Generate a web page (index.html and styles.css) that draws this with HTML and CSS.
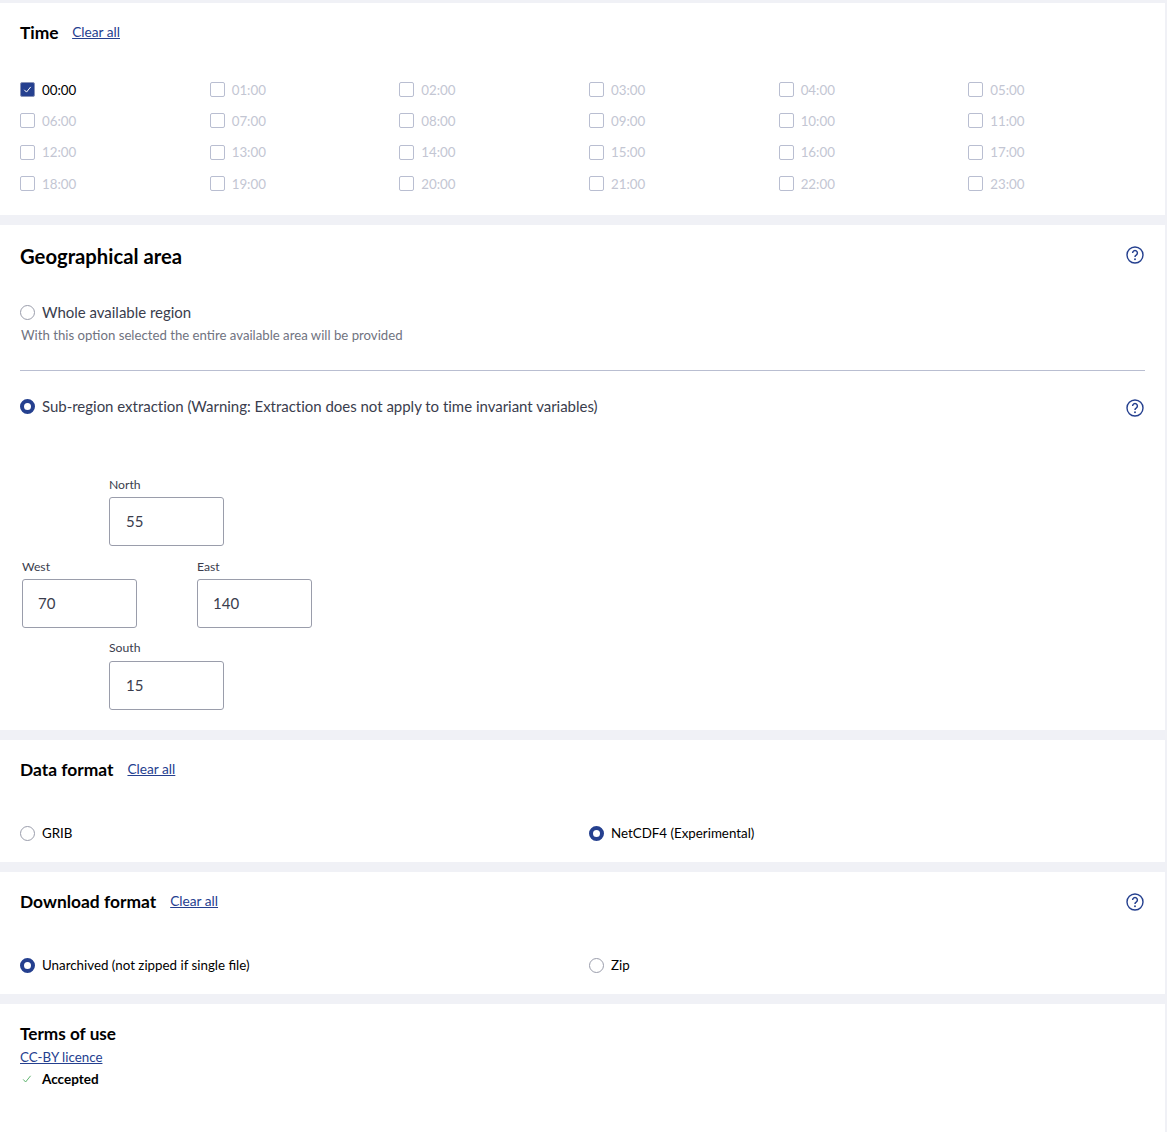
FILE: index.html
```html
<!DOCTYPE html>
<html lang="en">
<head>
<meta charset="utf-8">
<title>Download form</title>
<link rel="stylesheet" href="styles.css">
</head>
<body>
<main class="page">
  <section class="card card-time">
    <div class="head"><h2 class="title">Time</h2><a class="clear" href="#">Clear all</a></div>
    <div class="options time-grid">
      <label class="opt on"><span class="box checked"><svg viewBox="0 0 15 15" width="15" height="15"><path d="M4.3 7.8l2.2 2.3 4.2-5.2" fill="none" stroke="#fff" stroke-width="1"/></svg></span>00:00</label>
      <label class="opt off"><span class="box"></span>01:00</label>
      <label class="opt off"><span class="box"></span>02:00</label>
      <label class="opt off"><span class="box"></span>03:00</label>
      <label class="opt off"><span class="box"></span>04:00</label>
      <label class="opt off"><span class="box"></span>05:00</label>
      <label class="opt off"><span class="box"></span>06:00</label>
      <label class="opt off"><span class="box"></span>07:00</label>
      <label class="opt off"><span class="box"></span>08:00</label>
      <label class="opt off"><span class="box"></span>09:00</label>
      <label class="opt off"><span class="box"></span>10:00</label>
      <label class="opt off"><span class="box"></span>11:00</label>
      <label class="opt off"><span class="box"></span>12:00</label>
      <label class="opt off"><span class="box"></span>13:00</label>
      <label class="opt off"><span class="box"></span>14:00</label>
      <label class="opt off"><span class="box"></span>15:00</label>
      <label class="opt off"><span class="box"></span>16:00</label>
      <label class="opt off"><span class="box"></span>17:00</label>
      <label class="opt off"><span class="box"></span>18:00</label>
      <label class="opt off"><span class="box"></span>19:00</label>
      <label class="opt off"><span class="box"></span>20:00</label>
      <label class="opt off"><span class="box"></span>21:00</label>
      <label class="opt off"><span class="box"></span>22:00</label>
      <label class="opt off"><span class="box"></span>23:00</label>
    </div>
  </section>

  <section class="card card-geo">
    <div class="geo-head">
      <h2 class="title-lg">Geographical area</h2>
      <svg class="help" viewBox="0 0 18 18" width="18" height="18"><circle cx="9" cy="9" r="8" fill="none" stroke="#25408f" stroke-width="1.4"/><path d="M6.6 7a2.4 2.4 0 1 1 3.6 2.1c-.8.5-1.2.9-1.2 1.9" fill="none" stroke="#25408f" stroke-width="1.5"/><circle cx="9" cy="13.3" r=".95" fill="#25408f"/></svg>
    </div>
    <label class="opt-lg whole"><span class="radio"></span>Whole available region</label>
    <p class="hint">With this option selected the entire available area will be provided</p>
    <hr class="rule">
    <div class="sub-row">
      <label class="opt-lg"><span class="radio selected"></span>Sub-region extraction (Warning: Extraction does not apply to time invariant variables)</label>
      <svg class="help" viewBox="0 0 18 18" width="18" height="18"><circle cx="9" cy="9" r="8" fill="none" stroke="#25408f" stroke-width="1.4"/><path d="M6.6 7a2.4 2.4 0 1 1 3.6 2.1c-.8.5-1.2.9-1.2 1.9" fill="none" stroke="#25408f" stroke-width="1.5"/><circle cx="9" cy="13.3" r=".95" fill="#25408f"/></svg>
    </div>
    <div class="compass">
      <div class="field north"><span class="field-label">North</span><div class="input">55</div></div>
      <div class="field west"><span class="field-label">West</span><div class="input">70</div></div>
      <div class="field east"><span class="field-label">East</span><div class="input">140</div></div>
      <div class="field south"><span class="field-label">South</span><div class="input">15</div></div>
    </div>
  </section>

  <section class="card card-format">
    <div class="head"><h2 class="title">Data format</h2><a class="clear" href="#">Clear all</a></div>
    <div class="options pair">
      <label class="opt on"><span class="radio"></span>GRIB</label>
      <label class="opt on"><span class="radio selected"></span>NetCDF4 (Experimental)</label>
    </div>
  </section>

  <section class="card card-format">
    <div class="head spread">
      <div class="head"><h2 class="title">Download format</h2><a class="clear" href="#">Clear all</a></div>
      <svg class="help" viewBox="0 0 18 18" width="18" height="18"><circle cx="9" cy="9" r="8" fill="none" stroke="#25408f" stroke-width="1.4"/><path d="M6.6 7a2.4 2.4 0 1 1 3.6 2.1c-.8.5-1.2.9-1.2 1.9" fill="none" stroke="#25408f" stroke-width="1.5"/><circle cx="9" cy="13.3" r=".95" fill="#25408f"/></svg>
    </div>
    <div class="options pair">
      <label class="opt on"><span class="radio selected"></span>Unarchived (not zipped if single file)</label>
      <label class="opt on"><span class="radio"></span>Zip</label>
    </div>
  </section>

  <section class="card card-terms">
    <h2 class="title terms-title">Terms of use</h2>
    <a class="licence" href="#">CC-BY licence</a>
    <div class="accepted"><svg viewBox="0 0 10 10" width="10" height="10"><path d="M1.2 5.4l2.4 2.6 5-6.2" fill="none" stroke="#5fb56f" stroke-width="1"/></svg><strong>Accepted</strong></div>
  </section>
</main>
</body>
</html>
```
FILE: styles.css
```css
* { box-sizing: border-box; }
html, body { margin: 0; padding: 0; }
body {
  background: #f0f1f6;
  font-family: Lato, "Liberation Sans", sans-serif;
  color: #000;
  height: 1132px;
  overflow: hidden;
}
.page {
  width: 1165px;
  padding-top: 3px;
  display: flex;
  flex-direction: column;
  gap: 10px;
}
.card { background: #fff; padding: 0 20px; }
.card-time { height: 212px; padding-top: 19px; }
.card-geo { height: 505px; padding-top: 19px; }
.card-format { height: 122px; padding-top: 19px; }
.card-terms { height: 128px; padding-top: 19px; }

.head { display: flex; align-items: center; gap: 13.5px; height: 21px; }
.card-format .head { gap: 14px; }
.card-format .head.spread { gap: 0; }
.head.spread { justify-content: space-between; }
.title { margin: 0; font-size: 17.4px; line-height: 21px; font-weight: 700; }
.terms-title { font-size: 17.2px; }
.title-lg { margin: 0 0 2px; font-size: 20.25px; line-height: 24px; font-weight: 700; }
.clear, .licence { color: #25408f; font-size: 13.7px; line-height: 18px; text-decoration: underline; }
.licence { font-size: 13.33px; }
.clear { position: relative; top: -1px; }

.options { display: grid; grid-template-columns: repeat(6, 189.67px); }
.time-grid { margin-top: 31px; grid-auto-rows: 31.33px; }
.pair { margin-top: 45px; grid-template-columns: 569px 1fr; }
.opt { display: flex; align-items: center; gap: 7px; font-size: 13.33px; height: 16px; line-height: 16px; }
.time-grid .opt { height: 31.33px; }
.opt.off { color: #c3c6d3; }
.box {
  width: 15px; height: 15px;
  border: 1.5px solid #b9bed1;
  border-radius: 2px;
  background: #fff;
  flex: none;
  display: block;
}
.box.checked { background: #25408f; border: 1px solid #8a94b8; position: relative; }
.box.checked svg { display: block; position: absolute; left: -1px; top: -1px; }
.radio {
  width: 15px; height: 15px;
  flex: none;
  border-radius: 50%;
  border: 1.4px solid #9a9dab;
  background: #fff;
  display: block;
}
.radio.selected { border: 4px solid #25408f; }

.geo-head, .sub-row { display: flex; justify-content: space-between; align-items: center; }
.geo-head { height: 26px; }
.geo-head .help { position: relative; top: -2px; }
.opt-lg { display: flex; align-items: center; gap: 7px; font-size: 15px; letter-spacing: -0.02px; line-height: 20px; color: #3a3d4d; }
.whole { margin-top: 32px; }
.hint { margin: 4px 0 0 1px; font-size: 13.2px; line-height: 18px; color: #70737f; }
.rule { margin: 26px 0 0; border: 0; border-top: 1px solid #b9bed1; height: 0; }
.sub-row { margin-top: 24px; height: 22px; }
.sub-row .help { position: relative; top: 2px; }
.help { flex: none; margin-right: 1px; }

.compass {
  margin: 60px 0 0 2px;
  display: grid;
  grid-template-columns: 87px 28px 60px 27px 88px;
  grid-template-rows: 82px 82px 82px;
  width: 290px;
}
.field { display: flex; flex-direction: column; }
.north { grid-column: 2 / 5; grid-row: 1; }
.west { grid-column: 1 / 3; grid-row: 2; }
.east { grid-column: 4 / 6; grid-row: 2; }
.south { grid-column: 2 / 5; grid-row: 3; }
.field-label { font-size: 12.2px; line-height: 16px; height: 20px; color: #3a3d4d; }
.south .field-label { position: relative; top: -1px; }
.input {
  width: 115px; height: 49px;
  border: 1px solid #9a9dab;
  border-radius: 3px;
  padding: 0 15px;
  font-size: 15px;
  line-height: 47px;
  color: #3a3d4d;
  background: #fff;
}
.north .input, .south .input { padding-left: 16px; }

.licence { display: block; margin-top: 4px; }
.accepted { display: flex; align-items: center; gap: 10px; margin-top: 4px; padding-left: 2px; font-size: 13.5px; line-height: 18px; }
.accepted strong { font-weight: 700; }
```
